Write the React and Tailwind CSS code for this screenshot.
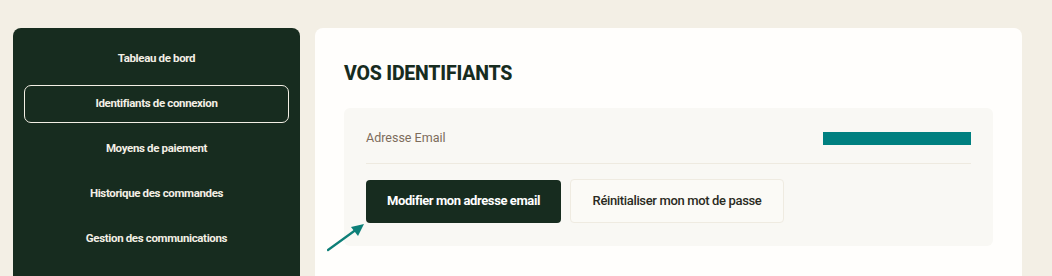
import React from "react";

const items = [
  "Tableau de bord",
  "Identifiants de connexion",
  "Moyens de paiement",
  "Historique des commandes",
  "Gestion des communications",
];

export default function App() {
  return (
    <div
      className="h-[276px] w-[1052px] overflow-hidden bg-[#f3efe5] pt-[28px] pl-[13px] flex gap-[15px]"
      style={{ fontFamily: "Roboto, 'Noto Sans', sans-serif" }}
    >
      <aside className="w-[287px] h-[300px] shrink-0 rounded-[8px] bg-[#172c1f] px-[11px] pt-[12px] flex flex-col gap-[7px]">
        {items.map((t, i) => (
          <div
            key={t}
            className={
              "h-[38px] flex items-center justify-center text-[11.5px] font-bold tracking-[-0.35px] text-[#f3efe5] rounded-[7px] " +
              (i === 1 ? "border border-[#f3efe5]" : "")
            }
          >
            {t}
          </div>
        ))}
      </aside>
      <main className="w-[707px] h-[300px] shrink-0 rounded-[8px] bg-[#fffefc] px-[29px] pt-[35px]">
        <h1 className="h-[22px] flex items-center text-[19.5px] font-extrabold text-[#172c1f] tracking-[-0.2px] leading-none">
          VOS IDENTIFIANTS
        </h1>
        <section className="relative mt-[23px] rounded-[6px] bg-[#f9f8f4] px-[22px] pt-[20px] pb-[23px]">
          <div className="flex items-center justify-between h-[20px] pb-0">
            <span className="text-[12.5px] text-[#7d6c5b]">Adresse Email</span>
            <span className="block w-[148px] h-[13px] bg-[#008080]" />
          </div>
          <div className="mt-[15px] border-t border-[#eeeae0]" />
          <div className="mt-[15px] flex gap-[9px] items-center">
            <button className="h-[43px] w-[195px] rounded-[4px] bg-[#172c1f] text-white text-[13px] font-bold tracking-[-0.4px]">
              Modifier mon adresse email
            </button>
            <button className="h-[44px] w-[214px] rounded-[4px] border border-[#efebe1] bg-[#fbfaf6] text-[#2a2a22] text-[13px] font-medium tracking-[-0.35px]">
              Réinitialiser mon mot de passe
            </button>
          </div>
          <svg
            className="absolute left-[-17px] top-[114px]"
            width="40"
            height="32"
            viewBox="0 0 40 32"
          >
            <line x1="1" y1="28" x2="30" y2="7" stroke="#0d7f78" strokeWidth="2.2" strokeLinecap="round" />
            <polygon points="37,2 24,5 31,14" fill="#0d7f78" />
          </svg>
        </section>
      </main>
    </div>
  );
}
